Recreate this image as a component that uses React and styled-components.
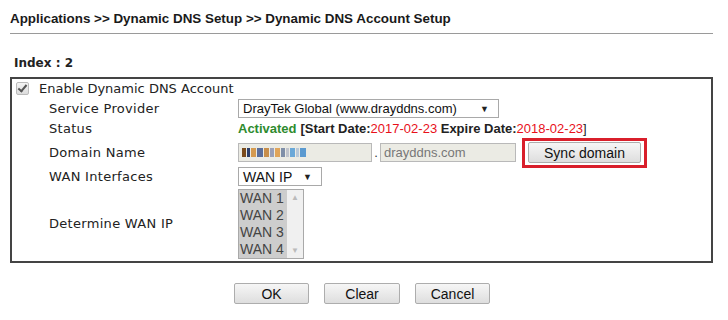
import React from 'react'
import styled, { createGlobalStyle } from 'styled-components'

const GlobalStyle = createGlobalStyle`
  body {
    margin: 0;
    background: #fff;
    font-family: "DejaVu Sans", Verdana, sans-serif;
    color: #222;
  }
`

const Page = styled.div`
  width: 728px;
  height: 320px;
  padding: 10px 0 0 10px;
  box-sizing: border-box;
`

const Title = styled.div`
  font-family: "Liberation Sans", Arial, sans-serif;
  font-weight: bold;
  font-size: 13.4px;
  color: #1a1a1a;
  width: 703px;
  height: 23px;
  border-bottom: 1px solid #9a9a9a;
  line-height: 17px;
`

const IndexLabel = styled.div`
  font-family: "DejaVu Sans", Verdana, sans-serif;
  font-weight: bold;
  font-size: 12px;
  margin: 22px 0 0 4px;
  height: 21px;
  line-height: 15px;
`

const Box = styled.div`
  width: 703px;
  height: 186px;
  box-sizing: border-box;
  border: 2px solid #444;
`

const Row = styled.div`
  display: flex;
  align-items: center;
  height: ${({ h }) => h}px;
  font-size: 13px;
  color: #222;
`

const Check = styled.span`
  width: 11px;
  height: 11px;
  margin: 0 10px 0 4px;
  border: 1px solid #bbb;
  background: linear-gradient(#f4f4f4, #dcdcdc);
  border-radius: 2px;
  position: relative;
  &::after {
    content: '';
    position: absolute;
    left: 3px;
    top: 0px;
    width: 3px;
    height: 7px;
    border: solid #555;
    border-width: 0 2px 2px 0;
    transform: rotate(40deg);
  }
`

const Label = styled.span`
  width: 189px;
  padding-left: 37px;
  flex: none;
  letter-spacing: 0.3px;
`

const Control = styled.div`
  display: flex;
  align-items: center;
  font-family: "Liberation Sans", Arial, sans-serif;
  font-size: 13px;
`

const Select = styled.div`
  width: ${({ w }) => w}px;
  height: 19px;
  box-sizing: border-box;
  border: 1px solid #a9a9a9;
  background: #fff;
  display: flex;
  align-items: center;
  justify-content: space-between;
  padding: 0 9px 0 4px;
  color: #111;
  font-size: ${({ fs }) => fs || 13}px;
`

const Arrow = styled.span`
  font-size: 9px;
  color: #222;
`

const Activated = styled.span`
  color: #2e8b2e;
  font-weight: bold;
  margin-right: 4px;
`

const Bold = styled.span`
  font-weight: bold;
`

const Red = styled.span`
  color: #e8101a;
`

const TextBox = styled.div`
  width: ${({ w }) => w}px;
  height: 19px;
  box-sizing: border-box;
  border: 1px solid #b9b9b9;
  background: #ebebe4;
  color: #777;
  display: flex;
  align-items: center;
  padding-left: 3px;
  gap: 1px;
`

const Pix = styled.span`
  width: ${({ w }) => w}px;
  height: 9px;
  background: ${({ c }) => c};
`

const Dot = styled.span`
  width: 8px;
  text-align: center;
  color: #333;
`

const Highlight = styled.div`
  margin-left: 6px;
  width: 125px;
  height: 30px;
  box-sizing: border-box;
  border: 3px solid #d91f2b;
  display: flex;
  align-items: center;
  justify-content: center;
`

const Button = styled.button`
  width: ${({ w }) => w || 75}px;
  height: 21px;
  padding: 0;
  font-family: "Liberation Sans", Arial, sans-serif;
  font-size: 14px;
  color: #111;
  border: 1px solid #adadad;
  border-radius: 2px;
  background: linear-gradient(#f6f6f6, #dedede);
`

const ListBox = styled.div`
  display: flex;
  width: 66px;
  height: 70px;
  box-sizing: border-box;
  border: 1px solid #a9a9a9;
  font-size: 14px;
  color: #444;
`

const Options = styled.div`
  flex: 1;
  background: #cdcdcd;
  line-height: 17px;
  padding-left: 1px;
`

const Scroll = styled.div`
  width: 16px;
  background: #f0f0f0;
  display: flex;
  flex-direction: column;
  justify-content: space-between;
  align-items: center;
  color: #bbb;
  font-size: 8px;
  padding: 3px 0;
`

const Actions = styled.div`
  display: flex;
  gap: 15px;
  margin: 20px 0 0 224px;
`

const blocks = [
  ['#7a4b1c', 4], ['#2c3e6a', 3], ['#d49a50', 5], ['#5b6e9a', 6], ['#c78e4a', 5],
  ['#9aa0b8', 4], ['#e0a55a', 5], ['#7f8fa8', 4], ['#c0c4cc', 3], ['#6aa8d8', 5],
  ['#b8c8d8', 3], ['#5b9ad0', 6]
]

export default function App () {
  return (
    <Page>
      <GlobalStyle />
      <Title>Applications &gt;&gt; Dynamic DNS Setup &gt;&gt; Dynamic DNS Account Setup</Title>
      <IndexLabel>Index : 2</IndexLabel>
      <Box>
        <Row h={19}>
          <Check />
          <span>Enable Dynamic DNS Account</span>
        </Row>
        <Row h={21}>
          <Label>Service Provider</Label>
          <Control>
            <Select w={261}>
              DrayTek Global (www.drayddns.com)
              <Arrow>▼</Arrow>
            </Select>
          </Control>
        </Row>
        <Row h={19}>
          <Label>Status</Label>
          <Control>
            <Activated>Activated</Activated>
            <Bold>[Start Date:</Bold>
            <Red>2017-02-23</Red>
            <Bold>&nbsp;Expire Date:</Bold>
            <Red>2018-02-23</Red>
            <span>]</span>
          </Control>
        </Row>
        <Row h={29}>
          <Label>Domain Name</Label>
          <Control>
            <TextBox w={134}>
              {blocks.map(([c, w], i) => <Pix key={i} c={c} w={w} />)}
            </TextBox>
            <Dot>.</Dot>
            <TextBox w={136}>drayddns.com</TextBox>
            <Highlight>
              <Button w={113}>Sync domain</Button>
            </Highlight>
          </Control>
        </Row>
        <Row h={19}>
          <Label>WAN Interfaces</Label>
          <Control>
            <Select w={84} fs={14}>
              WAN IP
              <Arrow>▼</Arrow>
            </Select>
          </Control>
        </Row>
        <Row h={75}>
          <Label>Determine WAN IP</Label>
          <Control>
            <ListBox>
              <Options>
                <div>WAN 1</div>
                <div>WAN 2</div>
                <div>WAN 3</div>
                <div>WAN 4</div>
              </Options>
              <Scroll>
                <span>▲</span>
                <span>▼</span>
              </Scroll>
            </ListBox>
          </Control>
        </Row>
      </Box>
      <Actions>
        <Button>OK</Button>
        <Button w={76}>Clear</Button>
        <Button>Cancel</Button>
      </Actions>
    </Page>
  )
}
